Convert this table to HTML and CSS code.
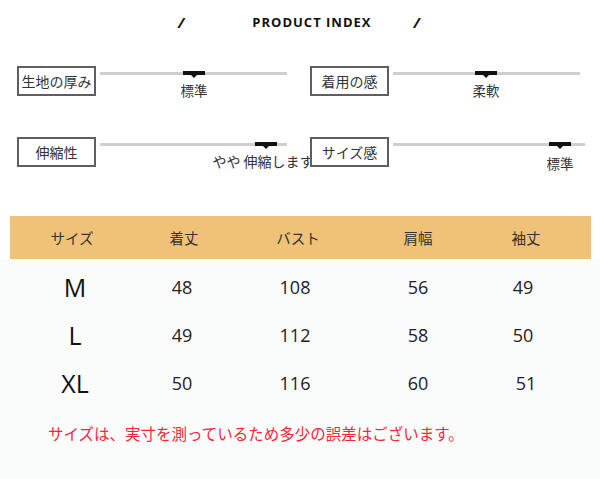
FILE: index.html
```html
<!DOCTYPE html>
<html lang="ja">
<head>
<meta charset="utf-8">
<link rel="stylesheet" href="styles.css">
</head>
<body>
<div class="page">
  <header class="title-row">
    <span class="slash">/</span>
    <span class="title">PRODUCT INDEX</span>
    <span class="slash">/</span>
  </header>

  <section class="index">
    <div class="index-row row-1">
      <div class="item">
        <div class="box">生地の厚み</div>
        <div class="track">
          <div class="marker" style="left:83px"><span class="mlabel">標準</span></div>
        </div>
      </div>
      <div class="item item-right">
        <div class="box">着用の感</div>
        <div class="track">
          <div class="marker" style="left:82px"><span class="mlabel">柔軟</span></div>
        </div>
      </div>
    </div>
    <div class="index-row row-2">
      <div class="item">
        <div class="box">伸縮性</div>
        <div class="track">
          <div class="marker" style="left:155px"><span class="mlabel mlabel-wide">やや 伸縮します</span></div>
        </div>
      </div>
      <div class="item item-right">
        <div class="box">サイズ感</div>
        <div class="track track-wide">
          <div class="marker" style="left:156px"><span class="mlabel mlabel-low">標準</span></div>
        </div>
      </div>
    </div>
  </section>

  <section class="size-table">
    <div class="thead">
      <div class="cell">サイズ</div>
      <div class="cell">着丈</div>
      <div class="cell">バスト</div>
      <div class="cell">肩幅</div>
      <div class="cell">袖丈</div>
    </div>
    <div class="tbody">
      <div class="trow">
        <div class="cell size">M</div>
        <div class="cell num c2">48</div>
        <div class="cell num c3">108</div>
        <div class="cell num">56</div>
        <div class="cell num c5">49</div>
      </div>
      <div class="trow">
        <div class="cell size">L</div>
        <div class="cell num c2">49</div>
        <div class="cell num c3">112</div>
        <div class="cell num">58</div>
        <div class="cell num c5">50</div>
      </div>
      <div class="trow">
        <div class="cell size">XL</div>
        <div class="cell num c2">50</div>
        <div class="cell num c3">116</div>
        <div class="cell num">60</div>
        <div class="cell num">51</div>
      </div>
    </div>
    <p class="note">サイズは、実寸を測っているため多少の誤差はございます。</p>
  </section>
</div>
</body>
</html>
```

FILE: styles.css
```css
html, body {
  margin: 0;
  padding: 0;
  background: #ffffff;
}

body {
  font-family: "Open Sans", "Noto Sans CJK JP", sans-serif;
  color: #222;
  width: 600px;
  height: 479px;
  overflow: hidden;
}

.page {
  width: 600px;
}

/* Title */
.title-row {
  height: 44px;
  display: flex;
  align-items: center;
  padding-left: 178px;
}

.slash {
  font-weight: 700;
  font-size: 15px;
  color: #111;
  font-style: italic;
}

.title {
  font-weight: 700;
  font-size: 13px;
  letter-spacing: 1px;
  color: #111;
  margin-left: 68px;
  margin-right: 42px;
}

/* Index */
.index {
  padding-top: 22px;
}

.index-row {
  display: flex;
  padding-left: 17px;
}

.row-1 { height: 71px; }
.row-2 { height: 79px; }

.item {
  display: flex;
  align-items: flex-start;
}

.item-right {
  margin-left: 23px;
}

.box {
  position: relative;
  z-index: 1;
  box-sizing: border-box;
  width: 79px;
  height: 30px;
  border: 2px solid #5f5f5f;
  background: #fff;
  display: flex;
  align-items: center;
  justify-content: center;
  font-family: "Noto Sans CJK JP", sans-serif;
  font-size: 14px;
  font-weight: 400;
  color: #333;
}

.track {
  position: relative;
  width: 187px;
  height: 3px;
  margin-top: 6px;
  margin-left: 4px;
  background: #cfcfcf;
}

.track-wide {
  width: 192px;
}

.marker {
  position: absolute;
  top: -1px;
  width: 22px;
  height: 4px;
  background: #111;
}

.marker::after {
  content: "";
  position: absolute;
  left: 8px;
  top: 4px;
  border-left: 3px solid transparent;
  border-right: 3px solid transparent;
  border-top: 3px solid #111;
}

.mlabel {
  position: absolute;
  left: 50%;
  top: 10px;
  transform: translateX(-50%);
  white-space: nowrap;
  font-family: "Noto Sans CJK JP", sans-serif;
  font-size: 13.5px;
  line-height: 18px;
  color: #333;
}

.mlabel-wide {
  font-size: 14px;
  margin-left: -3px;
}

.mlabel-low {
  top: 12px;
}

/* Table */
.thead,
.trow {
  display: grid;
  grid-template-columns: 124px 100px 128px 112px 104px;
  margin-left: 10px;
}

.thead {
  width: 581px;
  height: 43px;
  background: #efc278;
  align-items: center;
}

.thead .cell {
  font-family: "Noto Sans CJK JP", sans-serif;
  font-size: 14.5px;
  color: #333;
  text-align: center;
}

.tbody {
  background: #fafbfb;
  padding-top: 4px;
  padding-bottom: 6px;
}

.trow {
  height: 48px;
  align-items: center;
}

.cell {
  text-align: center;
}

.size {
  font-size: 25px;
  color: #111;
  padding-left: 6px;
}

.num {
  font-size: 18px;
  color: #222;
}

.c2 { padding-right: 4px; }
.c3 { padding-right: 6px; }
.c5 { padding-right: 6px; }

.note {
  margin: 0;
  padding: 10px 0 40px 48px;
  background: #fafbfb;
  font-family: "Noto Sans CJK JP", sans-serif;
  font-size: 15.5px;
  line-height: 20px;
  color: #f5283a;
}
```
